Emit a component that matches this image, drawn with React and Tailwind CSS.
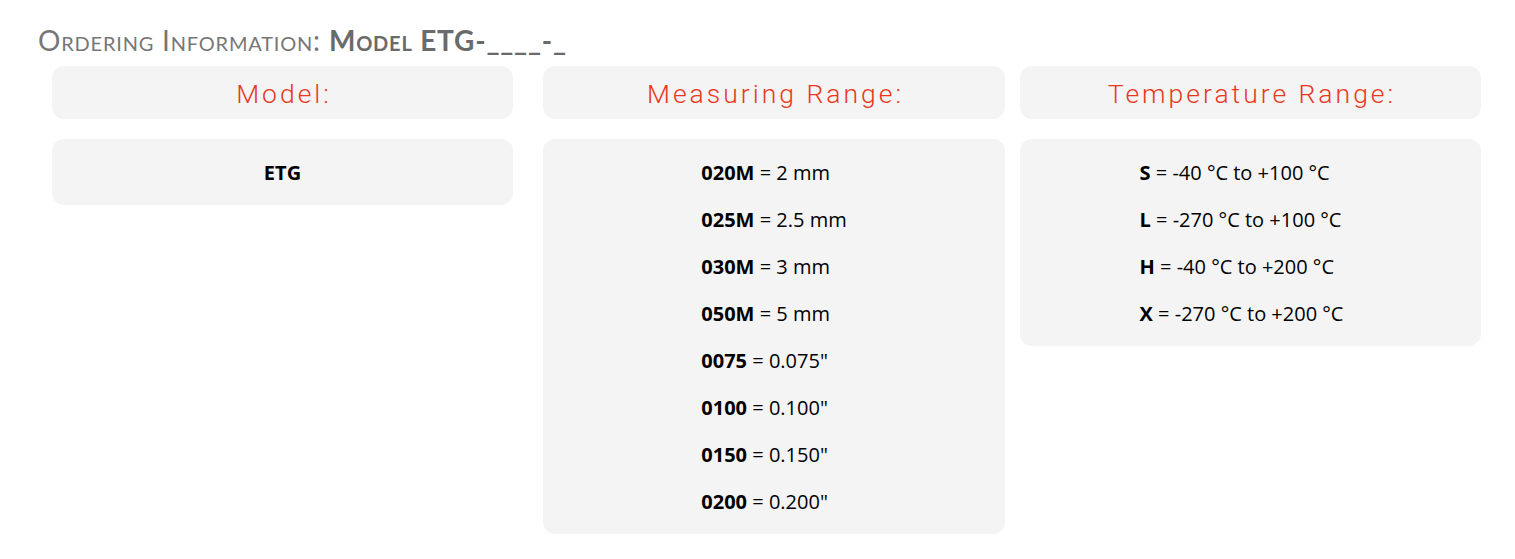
const measuring = [
  ["020M", "2 mm"],
  ["025M", "2.5 mm"],
  ["030M", "3 mm"],
  ["050M", "5 mm"],
  ["0075", "0.075\""],
  ["0100", "0.100\""],
  ["0150", "0.150\""],
  ["0200", "0.200\""],
];

const temps = [
  ["S", "-40 °C to +100 °C"],
  ["L", "-270 °C to +100 °C"],
  ["H", "-40 °C to +200 °C"],
  ["X", "-270 °C to +200 °C"],
];

function Head({ children }) {
  return (
    <div className="h-[53px] rounded-xl bg-[#f4f4f4] flex items-center justify-center pt-[3px] pl-[3px]">
      <span className="text-[26.5px] font-light tracking-[3px] text-[#e8381f] font-['Roboto',sans-serif]">{children}</span>
    </div>
  );
}

function Body({ rows, className = "" }) {
  return (
    <div className={"mt-[20px] rounded-xl bg-[#f4f4f4] pt-[10px] pb-[9px] text-center " + className}>
      <div className="inline-block text-left">
        {rows.map(([k, v]) => (
          <div key={k} className="leading-[47px] text-[20px] text-black">
            <b className="font-bold">{k}</b> = {v}
          </div>
        ))}
      </div>
    </div>
  );
}

export default function App() {
  return (
    <div className="bg-white w-[1515px] h-[559px] font-['Open_Sans',sans-serif]">
      <h2 className="pl-[38px] pt-[22px] text-[28px] leading-[36px] tracking-[0.8px] text-[#777] font-['Lato',sans-serif] [font-variant:small-caps]">
        Ordering Information: <span className="font-bold text-[#6a6a6a]">Model ETG-____-_</span>
      </h2>
      <div className="flex pl-[52px] pt-[8px]">
        <div className="w-[461px]">
          <Head>Model:</Head>
          <div className="mt-[20px] rounded-xl bg-[#f4f4f4] pt-[10px] pb-[9px] text-center leading-[47px] text-[20px] font-bold text-black">
            ETG
          </div>
        </div>
        <div className="w-[462px] ml-[30px]">
          <Head>Measuring Range:</Head>
          <Body rows={measuring} />
        </div>
        <div className="w-[461px] ml-[15px]">
          <Head>Temperature Range:</Head>
          <Body rows={temps} className="pr-[18px]" />
        </div>
      </div>
    </div>
  );
}
